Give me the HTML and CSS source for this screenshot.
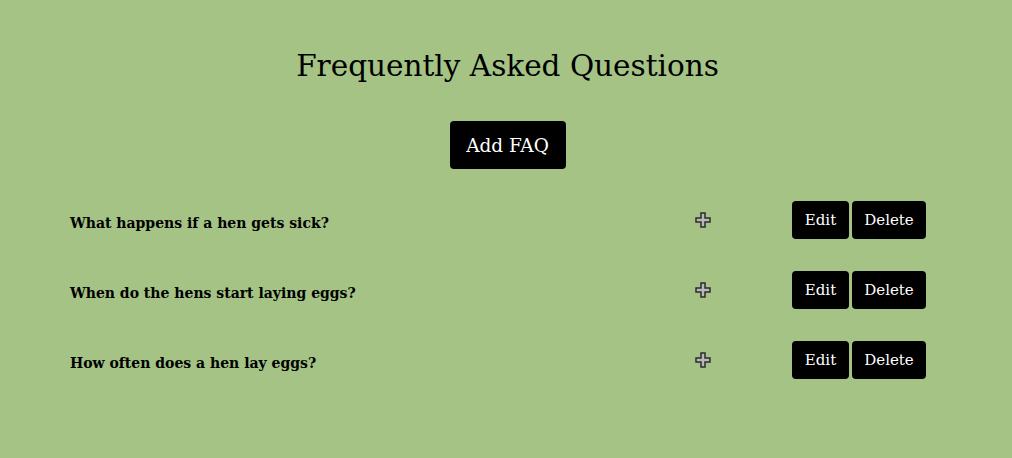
FILE: index.html
```html
<!DOCTYPE html>
<html lang="en">
<head>
    <meta charset="UTF-8">
    <meta name="viewport" content="width=device-width, initial-scale=1.0">
    <title>FAQ</title>
    <link rel="stylesheet" href="styles.css">
</head>
<body>

    <div class="faq-page">
        <h1>Frequently Asked Questions</h1>
        <button class="btn add-btn">Add FAQ</button>

        <!-- FAQ list -->
        <div class="faq-list">
            <div class="faq-item">
                <h3 class="question">What happens if a hen gets sick?</h3>
                <span class="toggle">
                    <svg width="16" height="16" viewBox="0 0 16 16"><path d="M6 1h4v5h5v4h-5v5H6v-5H1V6h5z" fill="#b9b9b9" stroke="#2b2b2b" stroke-width="1.5" stroke-linejoin="miter"/></svg>
                </span>
                <div class="actions">
                    <button class="btn small-btn edit-btn">Edit</button>
                    <button class="btn small-btn delete-btn">Delete</button>
                </div>
            </div>
            <div class="faq-item">
                <h3 class="question">When do the hens start laying eggs?</h3>
                <span class="toggle">
                    <svg width="16" height="16" viewBox="0 0 16 16"><path d="M6 1h4v5h5v4h-5v5H6v-5H1V6h5z" fill="#b9b9b9" stroke="#2b2b2b" stroke-width="1.5" stroke-linejoin="miter"/></svg>
                </span>
                <div class="actions">
                    <button class="btn small-btn edit-btn">Edit</button>
                    <button class="btn small-btn delete-btn">Delete</button>
                </div>
            </div>
            <div class="faq-item">
                <h3 class="question">How often does a hen lay eggs?</h3>
                <span class="toggle">
                    <svg width="16" height="16" viewBox="0 0 16 16"><path d="M6 1h4v5h5v4h-5v5H6v-5H1V6h5z" fill="#b9b9b9" stroke="#2b2b2b" stroke-width="1.5" stroke-linejoin="miter"/></svg>
                </span>
                <div class="actions">
                    <button class="btn small-btn edit-btn">Edit</button>
                    <button class="btn small-btn delete-btn">Delete</button>
                </div>
            </div>
        </div>
    </div>

</body>
</html>
```

FILE: styles.css
```css
body {
    font-family: "DejaVu Serif", serif;
    background-color: #a4c385;
    margin: 0;
    padding: 0;
    color: #000;
}

.faq-page {
    display: flex;
    flex-direction: column;
    align-items: center;
    padding: 46px 0 0 3px;
}

h1 {
    font-size: 29.5px;
    font-weight: normal;
    margin: 0 0 35px;
    line-height: 40px;
}

.btn {
    background-color: #000;
    color: #fff;
    border: none;
    border-radius: 4px;
    font-family: "DejaVu Serif", serif;
    cursor: pointer;
}

.add-btn {
    width: 116px;
    height: 48px;
    font-size: 18.5px;
    padding: 0;
}

/* FAQ rows */
.faq-list {
    align-self: stretch;
    margin: 32px 86px 0 67px;
}

.faq-item {
    display: flex;
    align-items: center;
    height: 38px;
    margin-bottom: 32px;
}

.question {
    flex: 1;
    margin: 0;
    font-size: 14px;
    font-weight: bold;
    padding-top: 6px;
}

.toggle {
    display: flex;
    width: 16px;
    height: 16px;
    margin-right: 81px;
}

.actions {
    display: flex;
    gap: 3px;
}

.small-btn {
    height: 38px;
    font-size: 15px;
    padding: 0;
}

.edit-btn {
    width: 57px;
}

.delete-btn {
    width: 74px;
}
```
